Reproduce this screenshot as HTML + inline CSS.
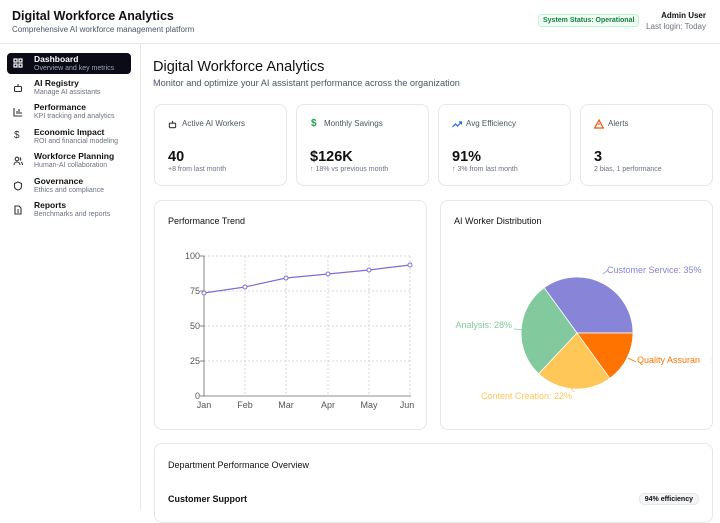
<!DOCTYPE html>
<html><head><meta charset="utf-8"><style>
*{box-sizing:border-box;margin:0;padding:0}
body{width:720px;height:510px;overflow:hidden;background:#fff;font-family:"Liberation Sans",sans-serif;color:#111;position:relative}
.abs{position:absolute}
.hdr{left:0;top:0;width:720px;height:44px;border-bottom:1px solid #e5e7eb}
.side{left:0;top:44px;width:141px;height:466px;border-right:1px solid #e5e7eb}
.item{position:absolute;left:7px;width:124px;height:21px}
.item .t{position:absolute;left:27px;top:0;font-size:8.5px;font-weight:bold;color:#111}
.item .s{position:absolute;left:27px;top:11px;font-size:7px;color:#6b7280}
.item .i{position:absolute;left:6px;top:5px;width:10px;height:10px}
.card{border:1px solid #e5e7eb;border-radius:8px;background:#fff}
.kt{font-size:8px;color:#4b5563}
.kv{font-size:14.5px;font-weight:bold}
.ks{font-size:7px;color:#6b7280}
</style></head><body>
<div class="abs hdr">
 <div class="abs" style="left:12px;top:9px;font-size:12.5px;font-weight:bold">Digital Workforce Analytics</div>
 <div class="abs" style="left:12px;top:25px;font-size:8px;color:#4b5563">Comprehensive AI workforce management platform</div>
 <div class="abs" style="left:538px;top:14px;height:13px;padding:0 4px;border:1px solid #bbf7d0;background:#f0fdf4;border-radius:4px;font-size:7px;font-weight:bold;color:#15803d;line-height:12px">System Status: Operational</div>
 <div class="abs" style="right:14px;top:11px;font-size:8px;font-weight:bold">Admin User</div>
 <div class="abs" style="right:14px;top:22px;font-size:8px;color:#6b7280">Last login: Today</div>
</div>
<div class="abs side">
 <div class="item" style="top:9px;background:#0b0b18;border-radius:4px">
  <svg class="i" viewBox="0 0 10 10" fill="none" stroke="#fff" stroke-width="1.2"><rect x="1" y="1" width="3" height="3"/><rect x="6" y="1" width="3" height="3"/><rect x="1" y="6" width="3" height="3"/><rect x="6" y="6" width="3" height="3"/></svg>
  <div class="t" style="color:#fff;top:1px">Dashboard</div><div class="s" style="color:#9ca3af;top:12px">Overview and key metrics</div></div>
 <div class="item" style="top:34px"><svg class="i" viewBox="0 0 10 10" fill="none" stroke="#333" stroke-width="1.1"><rect x="1.5" y="3.5" width="7" height="5" rx="1"/><path d="M5 1v2.5M3.5 6h0M6.5 6h0"/></svg><div class="t">AI Registry</div><div class="s">Manage AI assistants</div></div>
 <div class="item" style="top:58px"><svg class="i" viewBox="0 0 10 10" fill="none" stroke="#333" stroke-width="1.1"><path d="M1 1v8h8M4 7V4M6 7V2M8 7V5"/></svg><div class="t">Performance</div><div class="s">KPI tracking and analytics</div></div>
 <div class="item" style="top:83px"><div class="i" style="font-size:10px;top:3px;left:7px;color:#333">$</div><div class="t">Economic Impact</div><div class="s">ROI and financial modeling</div></div>
 <div class="item" style="top:107px"><svg class="i" viewBox="0 0 10 10" fill="none" stroke="#333" stroke-width="1.1"><circle cx="4" cy="3" r="1.8"/><path d="M1 9c0-2 1.5-3 3-3s3 1 3 3M7 1.5a1.8 1.8 0 010 3M8 6c1 .5 1.5 1.5 1.5 3"/></svg><div class="t">Workforce Planning</div><div class="s">Human-AI collaboration</div></div>
 <div class="item" style="top:132px"><svg class="i" viewBox="0 0 10 10" fill="none" stroke="#333" stroke-width="1.1"><path d="M5 1l3.5 1.5v3c0 2-1.8 3-3.5 3.5C3.3 8.5 1.5 7.5 1.5 5.5v-3z"/></svg><div class="t">Governance</div><div class="s">Ethics and compliance</div></div>
 <div class="item" style="top:156px"><svg class="i" viewBox="0 0 10 10" fill="none" stroke="#333" stroke-width="1.1"><path d="M2 1h4l2 2v6H2zM4 5h2M4 7h2"/></svg><div class="t">Reports</div><div class="s">Benchmarks and reports</div></div>
</div>
<div class="abs" style="left:153px;top:59px;font-size:14.5px">Digital Workforce Analytics</div>
<div class="abs" style="left:153px;top:78px;font-size:9.2px;color:#4b5563">Monitor and optimize your AI assistant performance across the organization</div>

<div class="abs card" style="left:154px;top:104px;width:133px;height:82px">
 <svg class="abs" style="left:13px;top:15px" width="9" height="9" viewBox="0 0 10 10" fill="none" stroke="#333" stroke-width="1.2"><rect x="1.5" y="3.5" width="7" height="5" rx="1"/><path d="M5 1v2.5"/></svg>
 <div class="abs kt" style="left:27px;top:14px">Active AI Workers</div><div class="abs kv" style="left:13px;top:44px">40</div><div class="abs ks" style="left:13px;top:61px">+8 from last month</div></div>
<div class="abs card" style="left:296px;top:104px;width:133px;height:82px">
 <div class="abs" style="left:14px;top:13px;font-size:10px;color:#16a34a;font-weight:bold">$</div>
 <div class="abs kt" style="left:27px;top:14px">Monthly Savings</div><div class="abs kv" style="left:13px;top:44px">$126K</div><div class="abs ks" style="left:13px;top:61px">↑ 18% vs previous month</div></div>
<div class="abs card" style="left:438px;top:104px;width:133px;height:82px">
 <svg class="abs" style="left:13px;top:15px" width="10" height="9" viewBox="0 0 10 9" fill="none" stroke="#2563eb" stroke-width="1.2"><path d="M0.5 7l3-3 2 2 4-4M7 2h2.5v2.5"/></svg>
 <div class="abs kt" style="left:27px;top:14px">Avg Efficiency</div><div class="abs kv" style="left:13px;top:44px">91%</div><div class="abs ks" style="left:13px;top:61px">↑ 3% from last month</div></div>
<div class="abs card" style="left:580px;top:104px;width:133px;height:82px">
 <svg class="abs" style="left:13px;top:14px" width="10" height="10" viewBox="0 0 10 10" fill="none" stroke="#ea580c" stroke-width="1.2"><path d="M5 1L9.3 9H.7z M5 4v2"/></svg>
 <div class="abs kt" style="left:27px;top:14px">Alerts</div><div class="abs kv" style="left:13px;top:44px">3</div><div class="abs ks" style="left:13px;top:61px">2 bias, 1 performance</div></div>

<div class="abs card" style="left:154px;top:200px;width:273px;height:230px">
 <div class="abs" style="left:13px;top:15px;font-size:9px">Performance Trend</div></div>
<div class="abs card" style="left:440px;top:200px;width:273px;height:230px">
 <div class="abs" style="left:13px;top:15px;font-size:9px">AI Worker Distribution</div></div>

<svg class="abs" style="left:0;top:0" width="720" height="510" font-family="Liberation Sans" font-size="9">
 <g stroke="#ccc" stroke-dasharray="2 2" stroke-width="0.8">
  <line x1="204" y1="256" x2="411" y2="256"/><line x1="204" y1="291" x2="411" y2="291"/><line x1="204" y1="326" x2="411" y2="326"/><line x1="204" y1="361" x2="411" y2="361"/>
  <line x1="245" y1="256" x2="245" y2="396"/><line x1="286" y1="256" x2="286" y2="396"/><line x1="328" y1="256" x2="328" y2="396"/><line x1="369" y1="256" x2="369" y2="396"/><line x1="410" y1="256" x2="410" y2="396"/>
 </g>
 <g stroke="#666" stroke-width="0.8"><line x1="204" y1="256" x2="204" y2="396"/><line x1="204" y1="396" x2="411" y2="396"/>
  <line x1="200" y1="256" x2="204" y2="256"/><line x1="200" y1="291" x2="204" y2="291"/><line x1="200" y1="326" x2="204" y2="326"/><line x1="200" y1="361" x2="204" y2="361"/><line x1="200" y1="396" x2="204" y2="396"/></g>
 <g fill="#555" text-anchor="end"><text x="200" y="259">100</text><text x="200" y="294">75</text><text x="200" y="329">50</text><text x="200" y="364">25</text><text x="200" y="399">0</text></g>
 <g fill="#555" text-anchor="middle"><text x="204" y="408">Jan</text><text x="245" y="408">Feb</text><text x="286" y="408">Mar</text><text x="328" y="408">Apr</text><text x="369" y="408">May</text><text x="407" y="408">Jun</text></g>
 <polyline fill="none" stroke="#7b6fd6" stroke-width="1.2" points="204,293 245,287 286,278 328,274 369,270 410,265"/>
 <g fill="#fff" stroke="#7b6fd6" stroke-width="1"><circle cx="204" cy="293" r="2"/><circle cx="245" cy="287" r="2"/><circle cx="286" cy="278" r="2"/><circle cx="328" cy="274" r="2"/><circle cx="369" cy="270" r="2"/><circle cx="410" cy="265" r="2"/></g>
 <g stroke="#fff" stroke-width="0.8">
  <path d="M577,333 L633,333 A56,56 0 0,0 544.1,287.7 Z" fill="#8884d8"/>
  <path d="M577,333 L544.1,287.7 A56,56 0 0,0 538.7,373.8 Z" fill="#82ca9d"/>
  <path d="M577,333 L538.7,373.8 A56,56 0 0,0 609.9,378.3 Z" fill="#ffc658"/>
  <path d="M577,333 L609.9,378.3 A56,56 0 0,0 633,333 Z" fill="#ff7300"/>
 </g>
 <g fill="none" stroke-width="0.8"><path d="M603,274 L608,270" stroke="#8884d8"/><path d="M514,329 L526,330" stroke="#82ca9d"/><path d="M574,392 L570,387" stroke="#ffc658"/><path d="M628,358 L636,362" stroke="#ff7300"/></g>
 <text x="607" y="273" fill="#8884d8">Customer Service: 35%</text>
 <text x="512" y="328" fill="#82ca9d" text-anchor="end">Analysis: 28%</text>
 <text x="481" y="399" fill="#ffc658">Content Creation: 22%</text>
 <text x="637" y="363" fill="#ff7300">Quality Assurance: 15%</text>
</svg>
<div class="abs" style="left:700px;top:340px;width:11px;height:40px;background:#fff"></div>
<div class="abs" style="left:713px;top:200px;width:7px;height:230px;background:#fff"></div>
<div class="abs" style="left:712px;top:206px;width:1px;height:218px;background:#e5e7eb"></div>

<div class="abs card" style="left:154px;top:443px;width:559px;height:80px">
 <div class="abs" style="left:13px;top:16px;font-size:9px">Department Performance Overview</div>
 <div class="abs" style="left:13px;top:50px;font-size:9px;font-weight:bold">Customer Support</div>
 <div class="abs" style="right:13px;top:49px;height:12px;padding:0 5px;background:#f3f4f6;border:1px solid #e5e7eb;border-radius:5px;font-size:7px;font-weight:bold;line-height:11px">94% efficiency</div>
</div>
</body></html>
